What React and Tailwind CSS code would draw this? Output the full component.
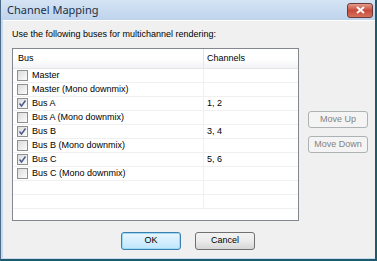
import React from "react";

const buses = [
  { name: "Master", checked: false, channels: "" },
  { name: "Master (Mono downmix)", checked: false, channels: "" },
  { name: "Bus A", checked: true, channels: "1, 2" },
  { name: "Bus A (Mono downmix)", checked: false, channels: "" },
  { name: "Bus B", checked: true, channels: "3, 4" },
  { name: "Bus B (Mono downmix)", checked: false, channels: "" },
  { name: "Bus C", checked: true, channels: "5, 6" },
  { name: "Bus C (Mono downmix)", checked: false, channels: "" },
  null,
  null,
];

const CheckBox = ({ checked }) => (
  <span className="w-[11px] h-[11px] border border-[#8e8f8f] bg-gradient-to-br from-[#dcdcdc] to-[#fbfbfb] flex items-center justify-center">
    {checked && (
      <svg width="9" height="9" viewBox="0 0 9 9">
        <path d="M1.5 4.5 L3.5 7 L7.5 1.5" fill="none" stroke="#4a5a8c" strokeWidth="1.4" />
      </svg>
    )}
  </span>
);

const App = () => {
  return (
    <div
      className="w-[377px] h-[261px] flex flex-col bg-[#c7daef] border-l border-l-[#4d6b88] border-r-2 border-r-[#1e5a6e] border-b-2 border-b-[#1e5a6e] text-[9px] text-black"
      style={{ fontFamily: '"Liberation Sans", Arial, sans-serif' }}
    >
      {/* title bar */}
      <div className="h-[20px] flex items-center justify-between pl-[6px] pr-[2px] bg-gradient-to-b from-[#d5e4f4] to-[#bed3ec]">
        <span className="text-[11px] text-[#1c2f44] pt-[1px]" style={{ fontFamily: '"Noto Sans", sans-serif' }}>Channel Mapping</span>
        <span className="w-[26px] h-[15px] rounded-[3px] border border-[#6b3a3a] bg-gradient-to-b from-[#e39b8a] via-[#c74a3c] to-[#d4705c] flex items-center justify-center">
          <svg width="9" height="8" viewBox="0 0 9 8">
            <path d="M1 1 L8 7 M8 1 L1 7" stroke="#fff" strokeWidth="2" />
          </svg>
        </span>
      </div>

      {/* client */}
      <div className="flex-1 bg-[#f0f0f0] ml-[2px] mb-[1px] border-t border-t-[#ffffff] pl-[9px] pt-[7px]">
        <div className="h-[12px] leading-[12px]">Use the following buses for multichannel rendering:</div>
        <div className="flex mt-[8px]">
          <div className="w-[287px] h-[173px] border border-[#828790] bg-white flex flex-col">
            <div className="h-[20px] flex border-b border-b-[#e5e5e5] bg-gradient-to-b from-white via-white to-[#f2f3f5]">
              <div className="w-[191px] pl-[5px] flex items-center border-r border-r-[#e5e5e5]">Bus</div>
              <div className="pl-[3px] flex items-center">Channels</div>
            </div>
            {buses.map((b, i) => (
              <div key={i} className="h-[14px] flex border-b border-b-[#f0f0f0]">
                <div className="w-[191px] flex items-center pl-[4px] gap-[4px] border-r border-r-[#f0f0f0]">
                  {b && <CheckBox checked={b.checked} />}
                  {b && <span>{b.name}</span>}
                </div>
                <div className="pl-[3px] flex items-center">{b && b.channels}</div>
              </div>
            ))}
          </div>
          <div className="ml-[9px] mt-[63px] flex flex-col gap-[8px]">
            <button className="w-[60px] h-[17px] rounded-[3px] border border-[#adb2b5] bg-[#f4f4f4] text-[#838383]">Move Up</button>
            <button className="w-[60px] h-[17px] rounded-[3px] border border-[#adb2b5] bg-[#f4f4f4] text-[#838383]">Move Down</button>
          </div>
        </div>
        <div className="flex justify-center gap-[14px] mt-[11px] pr-[11px]">
          <button className="w-[60px] h-[18px] rounded-[3px] border border-[#3c7fb1] bg-gradient-to-b from-[#eaf6fd] to-[#bee6fd] shadow-[inset_0_0_0_1px_#9cdaf5]">OK</button>
          <button className="w-[60px] h-[18px] rounded-[3px] border border-[#707070] bg-gradient-to-b from-[#f2f2f2] via-[#ebebeb] to-[#d6d6d6]">Cancel</button>
        </div>
      </div>
    </div>
  );
};

export default App;
